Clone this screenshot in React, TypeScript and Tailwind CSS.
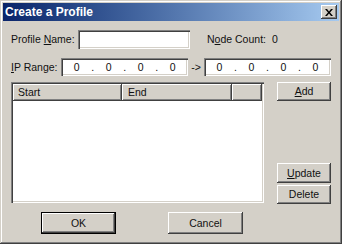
import React from 'react';

const raised =
  'bg-[#d4d0c8] shadow-[inset_-1px_-1px_#404040,inset_1px_1px_#fff,inset_-2px_-2px_#808080,inset_2px_2px_#d4d0c8]';
const sunken =
  'bg-white shadow-[inset_1px_1px_#808080,inset_2px_2px_#404040,inset_-1px_-1px_#fff,inset_-2px_-2px_#d4d0c8]';

function Btn({ children, w, h, def }: { children: React.ReactNode; w: string; h: string; def?: boolean }) {
  if (def) {
    return (
      <div className={`${w} ${h} border border-black`}>
        <div className={`${raised} w-full h-full flex items-center justify-center`}>{children}</div>
      </div>
    );
  }
  return <div className={`${raised} ${w} ${h} flex items-center justify-center`}>{children}</div>;
}

function IpBox() {
  const parts = ['0', '0', '0', '0'];
  return (
    <div className={`${sunken} w-[127px] h-[18px] flex items-center px-[2px]`}>
      {parts.map((p, i) => (
        <React.Fragment key={i}>
          {i > 0 && <span className="w-[5px] text-center">.</span>}
          <span className="w-[27px] text-center">{p}</span>
        </React.Fragment>
      ))}
    </div>
  );
}

export default function App() {
  return (
    <div className="w-[342px] h-[244px] bg-[#d4d0c8] p-[3px] flex flex-col text-[#111] text-[10.5px] leading-none font-['Liberation_Sans',Arial,sans-serif] shadow-[inset_-1px_-1px_#404040,inset_1px_1px_#d4d0c8,inset_-2px_-2px_#808080,inset_2px_2px_#fff]">
      {/* title bar */}
      <div className="h-[18px] bg-linear-to-r from-[#0a246a] to-[#a6caf0] flex items-center justify-between pl-[2px] pr-[2px]">
        <span className="text-white font-bold text-[12px]">Create a Profile</span>
        <div className={`${raised} w-[16px] h-[14px] flex items-center justify-center`}>
          <svg width="8" height="7" viewBox="0 0 8 7">
            <path d="M0 0h2l2 2.5L6 0h2L5 3.5 8 7H6L4 4.5 2 7H0l3-3.5z" fill="#000" />
          </svg>
        </div>
      </div>

      {/* content */}
      <div className="flex-1 flex flex-col px-[8px]">
        <div className="mt-[9px] h-[19px] flex items-center">
          <span className="w-[67px]">
            Profile <u className="underline-offset-1">N</u>ame:
          </span>
          <div className={`${sunken} w-[112px] h-[19px]`} />
          <span className="ml-[17px]">
            N<u className="underline-offset-1">o</u>de Count:
          </span>
          <span className="ml-[6px]">0</span>
        </div>

        <div className="mt-[9px] h-[18px] flex items-center">
          <span className="w-[51px]">
            <u className="underline-offset-1">I</u>P Range:
          </span>
          <IpBox />
          <span className="w-[16px] text-center">-&gt;</span>
          <IpBox />
        </div>

        <div className="mt-[6px] h-[122px] flex">
          <div className={`${sunken} w-[254px] h-[121px] p-[2px]`}>
            <div className="flex h-[17px]">
              <div className={`${raised} w-[109px] h-full flex items-center pl-[5px]`}>Start</div>
              <div className={`${raised} w-[110px] h-full flex items-center pl-[6px]`}>End</div>
              <div className={`${raised} flex-1 h-full`} />
            </div>
          </div>
          <div className="ml-[13px] w-[54px] flex flex-col">
            <Btn w="w-[54px]" h="h-[19px]">
              <u className="underline-offset-1">A</u>dd
            </Btn>
            <div className="flex-1" />
            <Btn w="w-[54px]" h="h-[20px]">
              <u className="underline-offset-1">U</u>pdate
            </Btn>
            <div className="mt-[2px]">
              <Btn w="w-[54px]" h="h-[19px]">Delete</Btn>
            </div>
          </div>
        </div>

        <div className="mt-[8px] flex pl-[30px] gap-[52px]">
          <Btn w="w-[75px]" h="h-[22px]" def>
            OK
          </Btn>
          <Btn w="w-[75px]" h="h-[22px]">
            Cancel
          </Btn>
        </div>
      </div>
    </div>
  );
}
